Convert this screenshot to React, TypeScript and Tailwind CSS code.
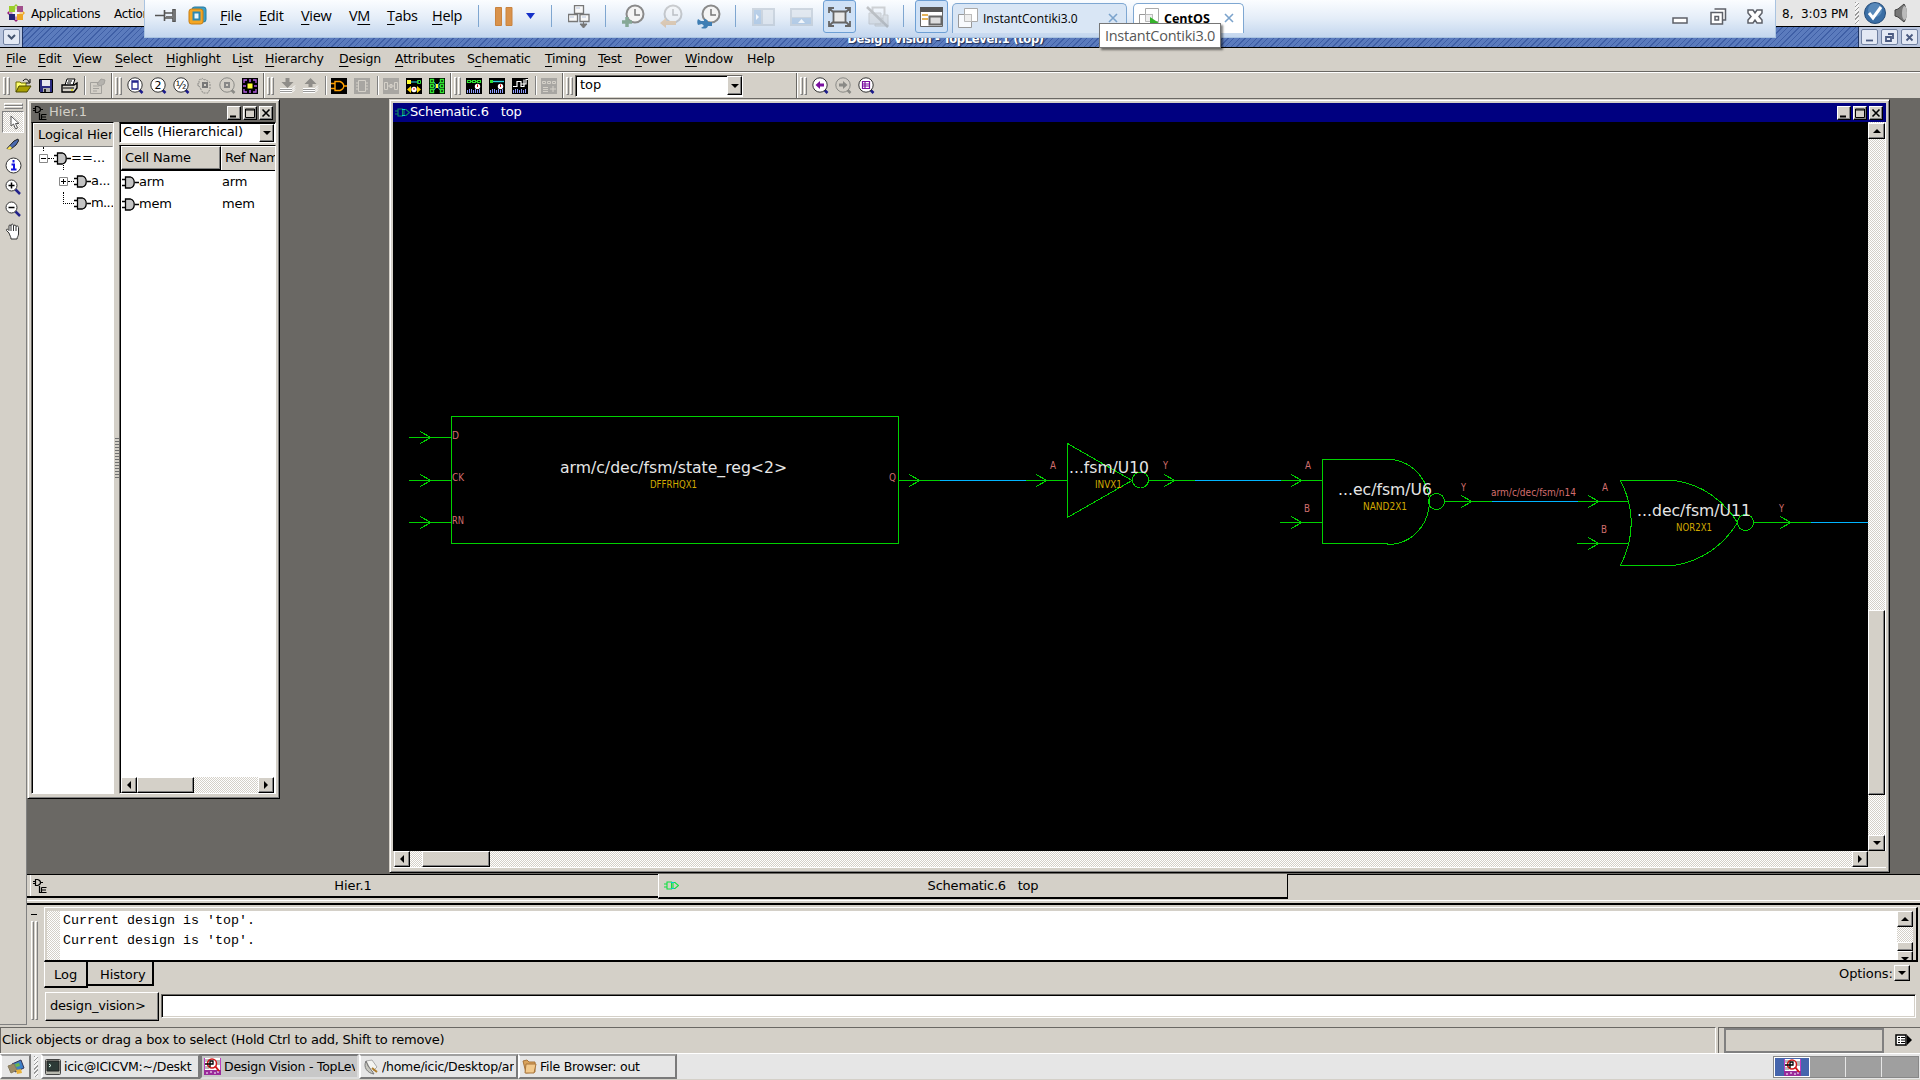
import React from "react";

type Kids = { children?: React.ReactNode; className?: string };

const CHECKER =
  "bg-[repeating-conic-gradient(#ffffff_0_25%,#d4d0c8_0_50%)] bg-[length:2px_2px]";
const RAISED =
  "bg-[#d4d0c8] border border-t-white border-l-white border-r-black border-b-black shadow-[inset_-1px_-1px_0_#808080]";

function Svg({ w, h, children, className = "", vb }: Kids & { w: number; h: number; vb?: string }) {
  return (
    <svg width={w} height={h} viewBox={vb ?? `0 0 ${w} ${h}`} className={`block shrink-0 ${className}`} fill="none">
      {children}
    </svg>
  );
}

function Arrow({ dir }: { dir: "up" | "down" | "left" | "right" }) {
  const d = { up: "M0 6h8L4 2z", down: "M0 2h8L4 6z", left: "M6 0v8L2 4z", right: "M2 0v8l4-4z" }[dir];
  return (
    <Svg w={8} h={8}>
      <path d={d} fill="#000" />
    </Svg>
  );
}

function Btn({ className = "", children }: Kids) {
  return <div className={`flex shrink-0 items-center justify-center ${RAISED} ${className}`}>{children}</div>;
}

function WinButtons() {
  return (
    <div className="flex gap-[2px]">
      <Btn className="h-[14px] w-[14px]">
        <Svg w={10} h={10}><path d="M1 8.500h6" stroke="#000" strokeWidth="2" /></Svg>
      </Btn>
      <Btn className="h-[14px] w-[14px]">
        <Svg w={10} h={10}><path d="M.5 1h9v8.500h-9zM.5 2h9" stroke="#000" /></Svg>
      </Btn>
      <Btn className="h-[14px] w-[14px]">
        <Svg w={10} h={10}><path d="M1.500 1.500l7 7M8.500 1.500l-7 7" stroke="#000" strokeWidth="1.600" /></Svg>
      </Btn>
    </div>
  );
}

/* ---------- virtual machine bar ---------- */

const U = ({ t }: { t: string }) => {
  const i = t.indexOf("&");
  if (i < 0) return <>{t}</>;
  return (
    <>
      {t.slice(0, i)}
      <span className="underline decoration-1 underline-offset-[3px]">{t[i + 1]}</span>
      {t.slice(i + 2)}
    </>
  );
};

const Sep = ({ className = "" }: Kids) => <div className={`mt-[5px] h-[22px] w-px shrink-0 bg-[#7fa6d0] ${className}`} />;

function Clock({ dim, mark }: { dim?: boolean; mark: "plus" | "back" | "wrench" }) {
  return (
    <Svg w={24} h={26} className={dim ? "opacity-40" : ""}>
      <circle cx="14" cy="10" r="8.500" fill="#f4f4f4" stroke="#8a8a8a" strokeWidth="2" />
      <path d="M14 5v6h5" stroke="#777" strokeWidth="1.500" />
      {mark === "plus" && <path d="M6 13v10M1 18h10" stroke="#86a896" strokeWidth="3.500" />}
      {mark === "back" && <path d="M1 19l6-5v3h10v4H7v3z" fill="#d79a55" />}
      {mark === "wrench" && (
        <path d="M1 15l3 2h3v-2c3 0 4 2 4 3h4v4h-4c-1 3-4 3-7 2l3-2-2-2-4 1c-1-2-1-4 0-6z" fill="#3f7eb4" />
      )}
    </Svg>
  );
}

function VmPages({ play }: { play?: boolean }) {
  return (
    <Svg w={20} h={20}>
      <path d="M6.500.5h13v13h-13z" fill="#fff" stroke="#aaa" />
      <path d="M.5 6.500h13v13H.5z" fill="#fff" fillOpacity=".8" stroke="#999" />
      <path d="M6.500 6.500h7v7h-7z" fill="#eee" stroke="#bbb" />
      {play && <path d="M11 9l9 6-9 6z" fill="#35b32a" />}
    </Svg>
  );
}

const vmMenu: [string, string][] = [
  ["&File", "w-[39px]"],
  ["&Edit", "w-[42px]"],
  ["&View", "w-[48px]"],
  ["V&M", "w-[38px]"],
  ["&Tabs", "w-[45px]"],
  ["&Help", "w-[46px]"],
];

function VmBar() {
  return (
    <div className="absolute left-[144px] top-0 flex h-[38px] w-[1632px] border-b border-l border-r border-[#a9c3e0] bg-linear-to-b from-[#fbfdff] via-[#e4edf8] to-[#c3d6ee]">
      <Svg w={22} h={13} className="ml-[10px] mt-[9px]">
        <path d="M0 6.500h9" stroke="#555" strokeWidth="1.500" />
        <path d="M9.500 1v11M10 4h8v5h-8M20 0.500v12h-2v-12z" stroke="#555" strokeWidth="1.600" />
        <path d="M11 7h7v2h-7z" fill="#777" />
      </Svg>
      <Svg w={19} h={20} className="ml-[11px] mt-[6px]">
        <rect x="4" y="1" width="14" height="15" rx="2.500" fill="#3b9fc6" stroke="#27799f" />
        <rect x="1" y="3" width="14" height="15" rx="2.500" fill="#f5a623" stroke="#c77d12" />
        <path d="M5.500 6.500h6v7h-6z" fill="#e8f4fa" stroke="#2c88b0" strokeWidth="2" />
      </Svg>
      <div className="ml-[13px] flex pt-[5px] font-['Open_Sans','Noto_Sans',sans-serif] text-[14.500px] leading-[21px] text-black">
        {vmMenu.map(([t, w]) => (
          <span key={t} className={`${w} whitespace-nowrap tracking-[-0.3px]`}><U t={t} /></span>
        ))}
      </div>
      <Sep />
      <Svg w={18} h={19} className="ml-[16px] mt-[7px]">
        <path d="M.5.5h6v18h-6zM11 .5h6v18h-6z" fill="#d9924b" stroke="#c9833f" />
      </Svg>
      <Svg w={9} h={6} className="ml-[13px] mt-[13px]"><path d="M0 0h9L4.500 6z" fill="#1530c8" /></Svg>
      <Sep className="ml-[16px]" />
      <Svg w={22} h={23} className="ml-[16px] mt-[5px]">
        <path d="M6.500.5h9v8h-9zM.5 9.500h9v7h-9zM12 9.500h9v7h-9z" fill="#f8f8f8" stroke="#777" strokeWidth="1.300" />
        <path d="M8 3h4M2 12h4M14 12h4" stroke="#b9c6dd" />
        <path d="M15.500 17v3M12 19h7l-3.500 4z" stroke="#777" fill="#777" />
      </Svg>
      <Sep className="ml-[15px]" />
      <div className="ml-[15px] mt-[4px] flex gap-[14px]">
        <Clock mark="plus" />
        <Clock mark="back" dim />
        <Clock mark="wrench" />
      </div>
      <Sep className="ml-[14px]" />
      <Svg w={23} h={18} className="ml-[16px] mt-[8px] opacity-60">
        <path d="M0 0h23v18H0z" fill="#b8c3cf" /><path d="M2 2h7v14H2z" fill="#98b9dd" /><path d="M11 2h10v14H11z" fill="#dbe2ea" /><path d="M4 6l3 3-3 3z" fill="#fff" />
      </Svg>
      <Svg w={23} h={18} className="ml-[15px] mt-[8px] opacity-60">
        <path d="M0 0h23v18H0z" fill="#b8c3cf" /><path d="M2 10h19v6H2z" fill="#98b9dd" /><path d="M2 2h19v7H2z" fill="#dbe2ea" /><path d="M8 15l3.500-4 3.500 4z" fill="#fff" />
      </Svg>
      <div className="ml-[10px] flex h-[33px] w-[33px] shrink-0 items-center justify-center rounded-[3px] border border-[#6d9fd4] bg-[#cfe1f6]">
        <Svg w={23} h={20}>
          <path d="M5.500 4.500h12v11h-12z" fill="#e8e8e8" stroke="#666" strokeWidth="1.800" />
          <path d="M1 6V1h5M17 1h5v5M22 14v5h-5M6 19H1v-5M1 1l4 4M22 1l-4 4M22 19l-4-4M1 19l4-4" stroke="#666" strokeWidth="1.800" />
        </Svg>
      </div>
      <Svg w={24} h={22} className="ml-[10px] mt-[6px] opacity-40">
        <path d="M6.500 1.500h12v11h-12z" stroke="#999" strokeWidth="2" />
        <path d="M3 7h12v11H3zM17 9h5v11H9v-2h8z" fill="#c4c8cc" stroke="#999" />
        <path d="M1 1l21 20" stroke="#777" strokeWidth="2.500" />
      </Svg>
      <Sep className="ml-[13px]" />
      <div className="ml-[11px] flex h-[33px] w-[33px] shrink-0 items-center justify-center rounded-[3px] border border-[#6d9fd4] bg-[#cfe1f6]">
        <Svg w={23} h={20}>
          <path d="M.5.5h22v19H.5z" fill="#fff" stroke="#666" /><path d="M0 0h23v5H0z" fill="#555" />
          <path d="M2 7h6v2H2zM2 11h6v2H2z" fill="#e4b45c" /><path d="M9.500 9.500h12v8h-12z" fill="#ddd" stroke="#666" strokeWidth="2" />
        </Svg>
      </div>
      <div className="ml-[4px] mt-[3px] flex h-[30px] w-[175px] shrink-0 rounded-t-[5px] border border-b-0 border-[#7ea7d2] bg-[#d9e6f5] font-['Open_Sans','Noto_Sans',sans-serif] text-[12px]">
        <div className="ml-[5px] mt-[4px]"><VmPages /></div>
        <span className="ml-[5px] mt-[6px] w-[119px] whitespace-nowrap leading-[18px]">InstantContiki3.0</span>
        <Svg w={10} h={10} className="ml-[6px] mt-[9px]"><path d="M1 1l8 8M9 1L1 9" stroke="#7ba3cc" strokeWidth="1.600" /></Svg>
      </div>
      <div className="ml-[6px] mt-[3px] flex h-[30px] w-[111px] shrink-0 rounded-t-[5px] border border-b-0 border-[#7ea7d2] bg-white font-['Open_Sans','Noto_Sans',sans-serif] text-[12.500px] font-bold">
        <div className="ml-[5px] mt-[4px]"><VmPages play /></div>
        <span className="ml-[5px] mt-[6px] w-[54px] leading-[18px]">CentOS</span>
        <Svg w={10} h={10} className="ml-[6px] mt-[9px]"><path d="M1 1l8 8M9 1L1 9" stroke="#7ba3cc" strokeWidth="1.600" /></Svg>
      </div>
      <Svg w={17} h={8} className="ml-[428px] mt-[17px]"><path d="M1 1h14v5H1z" fill="#fff" stroke="#5d6068" strokeWidth="1.500" /></Svg>
      <Svg w={17} h={17} className="ml-[21px] mt-[8px]">
        <path d="M4.500 1h11v11h-3M1 4.500h11.500V16H1z" fill="#fff" stroke="#5d6068" strokeWidth="1.500" /><path d="M5 8.500h3.500V12H5z" stroke="#5d6068" strokeWidth="1.500" />
      </Svg>
      <Svg w={16} h={15} className="ml-[20px] mt-[9px]">
        <path d="M1 1h5l2 3 2-3h5v3l-3 3.500 3 3.500v3h-5l-2-3-2 3H1v-3l3-3.500L1 4z" fill="#fff" stroke="#5d6068" strokeWidth="1.500" />
      </Svg>
    </div>
  );
}

/* ---------- gnome top panel and window title ---------- */

function TopArea() {
  return (
    <div className="relative h-[48px] shrink-0">
      <div className="flex h-[26px] items-center bg-[#e6e6e6] text-[12px]">
        <Svg w={18} h={18} className="ml-[7px]">
          <path d="M9 0l3 3-3 3-3-3z" fill="#9ccd2a" /><path d="M9 18l3-3-3-3-3 3z" fill="#932279" /><path d="M0 9l3-3 3 3-3 3z" fill="#932279" /><path d="M18 9l-3-3-3 3 3 3z" fill="#efa724" />
          <path d="M2 2h6v6H2z" fill="#9ccd2a" /><path d="M10 2h6v6h-6z" fill="#a14f8c" /><path d="M2 10h6v6H2z" fill="#262577" /><path d="M10 10h6v6h-6z" fill="#efa724" />
          <path d="M9 2v14M2 9h14" stroke="#fff" />
        </Svg>
        <span className="ml-[6px] w-[83px] pt-[2px] tracking-[-0.35px]">Applications</span>
        <span className="w-[1668px] pt-[2px] tracking-[-0.3px]">Actions</span>
        <span className="w-[19px] pt-[2px]">8,</span>
        <span className="w-[54px] whitespace-nowrap pt-[2px] tracking-[-0.15px]">3:03 PM</span>
        <div className="h-[22px] w-[4px] bg-[repeating-linear-gradient(135deg,#999_0_1px,#f4f4f4_1px_3px)]" />
        <Svg w={24} h={24} className="ml-[4px]">
          <circle cx="12" cy="12" r="10.500" fill="#3a6ea5" stroke="#274e7a" /><circle cx="12" cy="9" r="7" fill="#6d9bc8" opacity=".6" />
          <path d="M6 12l4 5 8-11" stroke="#fff" strokeWidth="3" />
        </Svg>
        <Svg w={16} h={20} className="ml-[7px]">
          <path d="M1 7l3-1 6-5c3 4 3 14 0 18l-6-5-3-1z" fill="#777" stroke="#444" /><ellipse cx="10.500" cy="10" rx="2.500" ry="7" fill="#bbb" />
        </Svg>
      </div>
      <div className="flex h-[22px] border-b border-t border-black bg-[repeating-linear-gradient(135deg,#3f5fa6_0_1px,#5b7bbd_1px_4px)]">
        <div className="flex w-[23px] items-center justify-center border-r border-[#1f3464] bg-[#b9c5de]">
          <div className="flex h-[16px] w-[17px] items-center justify-center rounded-[2px] border border-[#7080a0] bg-[#e4e9f4]">
            <Svg w={9} h={6}><path d="M1 1l3.500 3.500L8 1" stroke="#44546f" strokeWidth="2" /></Svg>
          </div>
        </div>
        <div className="flex w-[1835px] justify-center pl-[10px]">
          <span className="whitespace-nowrap pt-px text-[11.500px] font-bold leading-[22px] tracking-[-0.3px] text-white [text-shadow:1px_1px_1px_#1c2c55]">
            Design Vision - TopLevel.1 (top)
          </span>
        </div>
        <div className="flex flex-1 items-center justify-center gap-[3px] border-l border-[#1f3464] bg-[#b9c5de]">
          {["M1 7.500h7", "M1 4h5v4H1zM3 1h5v5", "M1.500 1.500l6 6M7.500 1.500l-6 6"].map((d) => (
            <div key={d} className="flex h-[16px] w-[17px] items-center justify-center rounded-[2px] border border-[#7080a0] bg-[#e4e9f4]">
              <Svg w={9} h={9}><path d={d} stroke="#4a5a80" strokeWidth="1.800" /></Svg>
            </div>
          ))}
        </div>
      </div>
      <VmBar />
      <div className="absolute left-[1099px] top-[23px] flex h-[25px] w-[122px] items-center justify-center border border-[#767676] bg-white font-['Open_Sans','Noto_Sans',sans-serif] text-[14.500px] tracking-[-0.25px] text-[#575757] shadow-[2px_2px_2px_rgba(0,0,0,0.5)]">
        InstantContiki3.0
      </div>
    </div>
  );
}

/* ---------- menus and toolbars ---------- */

const menu: [string, string][] = [
  ["&File", "w-[32px]"],
  ["&Edit", "w-[35px]"],
  ["&View", "w-[42px]"],
  ["&Select", "w-[51px]"],
  ["&Highlight", "w-[66px]"],
  ["L&ist", "w-[33px]"],
  ["&Hierarchy", "w-[74px]"],
  ["&Design", "w-[56px]"],
  ["&Attributes", "w-[72px]"],
  ["S&chematic", "w-[78px]"],
  ["&Timing", "w-[53px]"],
  ["&Test", "w-[37px]"],
  ["&Power", "w-[50px]"],
  ["&Window", "w-[62px]"],
  ["Help", "w-[40px]"],
];

const Handle = ({ className = "" }: Kids) => (
  <div className={`flex h-[18px] shrink-0 gap-px ${className}`}>
    <div className="w-[3px] border border-b-[#808080] border-l-white border-r-[#808080] border-t-white" />
    <div className="w-[3px] border border-b-[#808080] border-l-white border-r-[#808080] border-t-white" />
  </div>
);

const BarEnd = ({ className = "" }: Kids) => <div className={`h-full w-[2px] shrink-0 border-l border-r border-l-[#6a6864] border-r-white ${className}`} />;
const VSep = ({ className = "" }: Kids) => <div className={`h-[19px] w-[2px] shrink-0 border-l border-r border-l-[#808080] border-r-white ${className}`} />;

function Lens({ children, dim, className = "" }: Kids & { dim?: boolean }) {
  const c = dim ? "#8a8a86" : "#333";
  return (
    <Svg w={17} h={17} className={className}>
      <path d="M12 12.500l3.500 3.500" stroke={dim ? c : "#1b1b8a"} strokeWidth="2.500" />
      <circle cx="8" cy="8" r="7.200" fill={dim ? "#d4d0c8" : "#fff"} stroke={c} />
      {children}
    </Svg>
  );
}

const Dark = ({ children, className = "" }: Kids) => (
  <Svg w={16} h={16} className={className}>
    <path d="M0 0h16v16H0z" fill="#000" />
    {children}
  </Svg>
);
const Dim = ({ children, className = "" }: Kids) => (
  <Svg w={16} h={16} className={className}>
    <path d="M0 0h16v16H0z" fill="#a8a6a2" />
    {children}
  </Svg>
);
const Bars = () => <path d="M1.500 15v-3M3.500 15v-4M5.500 15v-4M7.500 15v-3M9.500 15v-4M11.500 15v-3M13.500 15v-4" stroke="#8f9bff" />;
const Gauge = () => (
  <>
    <circle cx="11.500" cy="8.500" r="2.700" fill="#fff" />
    <path d="M11.500 6.500v2.500" stroke="#d00" />
  </>
);

function Toolbar() {
  return (
    <div className="flex h-[27px] shrink-0 items-center border-b border-[#6a6864] border-t border-t-white">
      <Handle className="ml-[3px]" />
      <Svg w={17} h={16} className="ml-[5px]">
        <path d="M1 14V4h4l1 1h5v3" fill="#ffff6a" stroke="#6d6b00" /><path d="M1 14l3-6h12l-4 6z" fill="#a8a000" stroke="#4a4800" /><path d="M8 3c2-3 5-2 6 1M15 1v4h-4" stroke="#000" />
      </Svg>
      <Svg w={14} h={14} className="ml-[7px]">
        <path d="M.5.5h13v13h-12l-1-1z" fill="#2b2b80" stroke="#000" /><path d="M3 1h8v6H3z" fill="#e6e6ee" /><path d="M4 9h7v4H4z" fill="#b0b0b0" /><path d="M5 10h2v3H5z" fill="#222" />
      </Svg>
      <Svg w={17} h={15} className="ml-[8px]">
        <path d="M4 7l2-6h8l-2 6" fill="#fff" stroke="#000" /><path d="M1 7h12l3-2v5l-3 4H1z" fill="#d4d0c8" stroke="#000" strokeWidth="1.400" /><path d="M2 10h11M7 3h4M6 5h4" stroke="#000" /><path d="M10 12h2" stroke="#dd0" strokeWidth="1.500" />
      </Svg>
      <VSep className="ml-[6px]" />
      <Svg w={16} h={16} className="ml-[4px]">
        <path d="M.5 4.500h11v11H.5zM3 8h6M3 10.500h6M3 13h4" stroke="#a3a19c" /><path d="M7 6l4-5 4 1-1 4-4 2z" fill="#b5b3ae" stroke="#a3a19c" />
      </Svg>
      <BarEnd className="ml-[5px]" />
      <Handle className="ml-[2px]" />
      <Lens className="ml-[5px]"><path d="M5 4h6v8H5zM5 5h6" stroke="#26268c" strokeWidth="1.300" /></Lens>
      <Lens className="ml-[6px]"><text x="8" y="12" textAnchor="middle" fontSize="11" fill="#000" fontFamily="DejaVu Sans">2</text></Lens>
      <Lens className="ml-[6px]"><text x="8" y="12" textAnchor="middle" fontSize="11" fill="#000" fontFamily="DejaVu Sans">½</text></Lens>
      <Svg w={17} h={17} className="ml-[6px]">
        <path d="M3 9c-3-1-2-3 0-2V3c1-1 2-1 2 0 1-2 2-2 3 0 2-1 3 0 3 1 2 0 3 1 3 3v5l-2 4H7z" stroke="#8a8a86" strokeDasharray="2 1" /><path d="M7 6h4v4H7z" stroke="#777" strokeWidth="2" />
      </Svg>
      <Lens dim className="ml-[6px]"><path d="M6 6h4v4H6z" stroke="#888" strokeWidth="2" /></Lens>
      <Dark className="ml-[6px]">
        <path d="M5.500 5.500h5v5h-5z" fill="#ffff30" /><path d="M2 5V2h3M11 2h3v3M14 11v3h-3M5 14H2v-3" stroke="#b05be0" strokeWidth="1.300" /><path d="M8 1v3M8 12v3M1 8h3M12 8h3" stroke="#b05be0" strokeWidth="1.500" />
      </Dark>
      <BarEnd className="ml-[5px]" />
      <Handle className="ml-[2px]" />
      {[0, 1].map((i) => (
        <Svg key={i} w={17} h={16} className={i ? "ml-[6px]" : "ml-[5px]"}>
          <path d={i ? "M2.500 6h4v3h4V6h4l-6-6z" : "M2.500 4h4V0h4v4h4l-6 6z"} fill="#8f8d89" />
          <path d="M1 10.500h12l3-3M1 12.500h12l3-3M1 14.500h12l3-3" stroke="#fff" /><path d="M1 11.500h12M1 13.500h12" stroke="#999" />
        </Svg>
      ))}
      <VSep className="ml-[6px]" />
      <Dark className="ml-[4px]"><path d="M4 3.500h5c5 2 5 7 0 9H4zM0 5.500h4M0 10.500h4M12 8h4" stroke="#ffa000" strokeWidth="1.400" /></Dark>
      <Dim className="ml-[7px]"><path d="M4.500 2.500h7v11h-7zM2 5h2M2 8h2M2 11h2M12 5h2M12 8h2M12 11h2" stroke="#d4d0c8" /></Dim>
      <VSep className="ml-[7px]" />
      <Dim className="ml-[4px]"><path d="M1.500 4.500h3v7h-3zM11.500 4.500h3v7h-3zM5 8h6M7 6.500h2v3H7z" stroke="#d4d0c8" /></Dim>
      <Dark className="ml-[7px]">
        <path d="M3 4h10" stroke="#2ad6e0" /><path d="M1 2h4v4H1z" fill="#ffff30" /><path d="M11.500 2.500h3v3h-3z" stroke="#30e030" /><path d="M5 8v7l-4-3.500zM11 8v7l4-3.500z" fill="#ffd900" /><circle cx="8" cy="11.500" r="2.700" fill="#fff" /><path d="M8 10v2" stroke="#d00" />
      </Dark>
      <Dark className="ml-[7px]">
        <path d="M4 3l4 5-4 5M12 3L8 8l4 5M5 8h6" stroke="#2ad6e0" /><path d="M1.500 1.500h3v3h-3zM1.500 6.500h3v3h-3zM1.500 11.500h3v3h-3zM11.500 1.500h3v3h-3zM11.500 6.500h3v3h-3zM11.500 11.500h3v3h-3z" stroke="#30e030" strokeWidth="1.400" /><path d="M7 6h2v4H7z" fill="#ffff30" />
      </Dark>
      <BarEnd className="ml-[5px]" />
      <Handle className="ml-[2px]" />
      <Dark className="ml-[5px]"><path d="M1.500 2.500h3v2h-3zM6.500 2.500h3v2h-3zM11.500 2.500h3v2h-3zM5 3.500h1M10 3.500h1" stroke="#30e030" strokeWidth="1.200" /><Bars /><Gauge /></Dark>
      <Dark className="ml-[7px]"><path d="M4 3.500h11" stroke="#2ad6e0" strokeWidth="1.400" /><path d="M1 2h3v3H1z" fill="#30e030" /><Bars /><Gauge /></Dark>
      <Dark className="ml-[7px]"><path d="M1 8.500h4v-5h4v5h3v-7M9 6h5V1.500h2" stroke="#fff" strokeWidth="1.200" /><Bars /></Dark>
      <VSep className="ml-[7px]" />
      <Dim className="ml-[4px]"><path d="M1.500 3.500h3v2h-3zM6.500 3.500h3v2h-3zM11.500 3.500h3v2h-3zM2 9.500h5M2 11.500h5M2 13.500h5M12 8v6M9 11h6" stroke="#d4d0c8" /></Dim>
      <BarEnd className="ml-[5px]" />
      <Handle className="ml-[2px]" />
      <div className="ml-[2px] flex h-[22px] w-[168px] shrink-0 items-center border border-b-white border-l-[#6a6864] border-r-white border-t-[#6a6864] bg-white pl-[4px] shadow-[inset_1px_1px_0_#000]">
        <span className="w-[147px] pb-px">top</span>
        <Btn className="h-[19px] w-[15px]"><Arrow dir="down" /></Btn>
      </div>
      <BarEnd className="ml-[53px]" />
      <Handle className="ml-[2px]" />
      <Lens className="ml-[5px]"><path d="M3.500 8L8 4v2.500h4v3H8V12z" fill="#7a0fa0" /></Lens>
      <Lens dim className="ml-[6px]"><path d="M12.500 8L8 4v2.500H4v3h4V12z" fill="#8a8a86" /></Lens>
      <Lens className="ml-[6px]"><path d="M4.500 4.500h7v7h-7zM4.500 7h7M4.500 9h7M7 4.500v7" stroke="#7a0fa0" strokeWidth="1.200" /></Lens>
    </div>
  );
}

/* ---------- left tool strip ---------- */

function ToolStrip() {
  return (
    <div className="flex w-[27px] shrink-0 flex-col items-center border-b border-r border-[#808080]">
      <div className="mt-[4px] h-[3px] w-[19px] border border-b-[#808080] border-l-white border-r-[#808080] border-t-white" />
      <div className="h-[3px] w-[19px] border border-b-[#808080] border-l-white border-r-[#808080] border-t-white" />
      <div className={`mt-[2px] flex h-[22px] w-[22px] items-center justify-center border border-b-white border-l-[#808080] border-r-white border-t-[#808080] ${CHECKER}`}>
        <Svg w={10} h={15} className="ml-[3px]"><path d="M1 1v10l2.500-2 2 5 2-1-2-4.500H9z" fill="#fff" stroke="#555" /></Svg>
      </div>
      <Svg w={14} h={12} className="mt-[5px]"><path d="M1 10.500L8 3l4-2 .5 2L10 7l-5 4z" fill="#4a6ab0" stroke="#222" /><path d="M1 11l3-3 2 2-2 1.500z" fill="#ffe34a" /></Svg>
      <Svg w={17} h={17} className="mt-[7px]"><circle cx="8.500" cy="8.500" r="7.500" fill="#fff" stroke="#333" /><path d="M8.500 3v2.500M6.500 7.500h2.500v5M6 12.500h5.500" stroke="#1414e0" strokeWidth="2" /></Svg>
      {[true, false].map((p) => (
        <Svg key={String(p)} w={16} h={16} className={p ? "mt-[5px]" : "mt-[6px]"}>
          <path d="M10 10l5 5" stroke="#23238c" strokeWidth="2.500" /><circle cx="6.500" cy="6.500" r="5.500" fill="#fff" stroke="#333" />
          <path d={p ? "M3.500 6.500h6M6.500 3.500v6" : "M3.500 6.500h6"} stroke="#000" strokeWidth="1.500" />
        </Svg>
      ))}
      <Svg w={17} h={17} className="mt-[6px]"><path d="M4 10L1.500 7.500C1 6 2.500 5.500 4 7.500V3c0-1.500 2-1.500 2 0 0-2.500 2.500-2.500 2.500 0 .5-1.500 2.500-1.200 2.500.5 1-1 2.500-.5 2.500 1V11c0 2-1.500 3-1.500 5H6c0-2-1-3-2-6zM6 3v5M8.500 3v5M11 3.500V8" fill="#fff" stroke="#333" /></Svg>
    </div>
  );
}

/* ---------- hierarchy window ---------- */

const Gate = () => (
  <Svg w={17} h={13}>
    <path d="M3.500 1h5c5 1.500 5 9.500 0 11h-5zM0 3.500h3.500M0 9.500h3.500M13 6.500h4" fill="#c4c4c4" stroke="#000" strokeWidth="1.300" />
  </Svg>
);
const HierIcon = ({ c = "#000" }: { c?: string }) => (
  <Svg w={15} h={16}>
    <path d="M2.500 1.500h2c4 1 4 5 0 6h-2zM0 3.500h2M0 5.500h2M8 4.500h2M6.500 8v6.500h2M8.500 9.500h5M8.500 9.500v5h5M9 12h4" stroke={c} strokeWidth="1.200" />
  </Svg>
);
const Box = ({ plus }: { plus?: boolean }) => (
  <Svg w={9} h={9}>
    <path d="M.5.5h8v8h-8z" fill="#fff" stroke="#888" />
    <path d={plus ? "M2 4.500h5M4.500 2v5" : "M2 4.500h5"} stroke="#000" />
  </Svg>
);
const Dots = () => <div className="w-[6px] shrink-0 border-t border-dotted border-black" />;

function HierWindow() {
  return (
    <div className="absolute left-0 top-0 flex h-[700px] w-[253px] flex-col border border-b-black border-l-[#d4d0c8] border-r-black border-t-[#d4d0c8] bg-[#d4d0c8] p-[3px] pb-[4px] shadow-[inset_1px_1px_0_#fff,inset_-1px_-1px_0_#808080]">
      <div className="flex h-[19px] shrink-0 items-center bg-[#6a6864] pl-[2px] pr-[3px] text-[#d4d0c8]">
        <HierIcon />
        <span className="ml-[1px] flex-1 pb-[2px]">Hier.1</span>
        <WinButtons />
      </div>
      <div className="flex min-h-0 flex-1">
        <div className="flex w-[83px] shrink-0 flex-col overflow-hidden border border-b-white border-l-[#6a6864] border-r-white border-t-black bg-white pl-px shadow-[inset_1px_0_0_#000]">
          <div className="h-[24px] w-[80px] shrink-0 overflow-hidden whitespace-nowrap border border-b-[#808080] border-l-white border-r-[#d4d0c8] border-t-white bg-[#d4d0c8] pl-[4px] leading-[21px] tracking-[-0.1px]">
            Logical Hier
          </div>
          <div className="ml-[10px] h-[4px] w-px shrink-0 border-l border-dotted border-black" />
          <div className="flex h-[14px] items-center pl-[6px]">
            <Box /><Dots /><Gate /><span className="whitespace-nowrap pb-px">==...</span>
          </div>
          <div className="ml-[30px] h-[5px] shrink-0 border-l border-dotted border-black" />
          <div className="flex h-[22px] items-center pl-[26px]">
            <Box plus /><Dots /><Gate /><span className="whitespace-nowrap pb-px tracking-[-0.3px]">a...</span>
          </div>
          <div className="flex h-[22px] items-center pl-[30px]">
            <div className="mb-[11px] h-[12px] w-[11px] shrink-0 border-b border-l border-dotted border-black" />
            <Gate /><span className="whitespace-nowrap pb-px tracking-[-0.6px]">m...</span>
          </div>
        </div>
        <div className="flex w-[5px] shrink-0 flex-col justify-center gap-[2px] pl-px">
          {Array.from({ length: 14 }, (_, i) => (
            <div key={i} className="h-px w-[4px] bg-[#707070]" />
          ))}
        </div>
        <div className="flex min-w-0 flex-1 flex-col">
          <div className="flex h-[21px] shrink-0 border border-b-white border-l-[#6a6864] border-r-white border-t-black bg-white pl-[3px] shadow-[inset_1px_1px_0_#000]">
            <span className="flex-1 whitespace-nowrap leading-[18px] tracking-[-0.15px]">Cells (Hierarchical)</span>
            <Btn className="mr-px mt-px h-[18px] w-[15px]"><Arrow dir="down" /></Btn>
          </div>
          <div className="mt-[2px] flex min-h-0 flex-1 flex-col border border-b-white border-l-[#6a6864] border-r-white border-t-black bg-white pl-px shadow-[inset_1px_1px_0_#000]">
            <div className="flex h-[25px] shrink-0 border-b border-black leading-[22px]">
              <div className={`w-[100px] pl-[3px] tracking-[-0.1px] ${RAISED}`}>Cell Name</div>
              <div className="min-w-0 flex-1 overflow-hidden whitespace-nowrap border-l border-t border-white bg-[#d4d0c8] pl-[3px] tracking-[-0.3px]">Ref Nam</div>
            </div>
            {["arm", "mem"].map((n) => (
              <div key={n} className="flex h-[22px] shrink-0 items-center pl-px tracking-[-0.2px]">
                <Gate /><span className="w-[83px] pb-px">{n}</span><span className="pb-px">{n}</span>
              </div>
            ))}
            <div className="flex-1" />
            <div className={`mr-px flex h-[16px] shrink-0 ${CHECKER}`}>
              <Btn className="w-[16px]"><Arrow dir="left" /></Btn>
              <Btn className="w-[57px]" />
              <div className="flex-1" />
              <Btn className="w-[16px]"><Arrow dir="right" /></Btn>
            </div>
          </div>
        </div>
      </div>
    </div>
  );
}

/* ---------- schematic window ---------- */

const labels: [string, number, number, number, number, string][] = [
  ["arm/c/dec/fsm/state_reg<2>", 560, 473, 227, 16, "#e6e6e6"],
  ["DFFRHQX1", 650, 488, 47, 9.7, "#d2aa00"],
  ["D", 452, 439, 7, 9.7, "#d26e6e"],
  ["CK", 452, 481, 12, 9.7, "#d26e6e"],
  ["RN", 452, 524, 12, 9.7, "#d26e6e"],
  ["Q", 889, 481, 7, 9.7, "#d26e6e"],
  ["A", 1050, 469, 6, 9.7, "#d26e6e"],
  ["...fsm/U10", 1069, 473, 80, 16, "#e6e6e6"],
  ["INVX1", 1095, 488, 27, 9.7, "#d2aa00"],
  ["Y", 1163, 469, 5, 9.7, "#d26e6e"],
  ["A", 1305, 469, 6, 9.7, "#d26e6e"],
  ["B", 1304, 512, 6, 9.7, "#d26e6e"],
  ["...ec/fsm/U6", 1338, 495, 94, 16, "#e6e6e6"],
  ["NAND2X1", 1363, 510, 44, 9.7, "#d2aa00"],
  ["Y", 1461, 491, 5, 9.7, "#d26e6e"],
  ["arm/c/dec/fsm/n14", 1491, 496, 85, 9.7, "#d26e6e"],
  ["A", 1602, 491, 6, 9.7, "#d26e6e"],
  ["B", 1601, 533, 6, 9.7, "#d26e6e"],
  ["...dec/fsm/U11", 1637, 516, 114, 16, "#e6e6e6"],
  ["NOR2X1", 1676, 531, 36, 9.7, "#d2aa00"],
  ["Y", 1779, 512, 5, 9.7, "#d26e6e"],
];
const arrows: [number, number][] = [
  [431, 437.5], [431, 480.5], [431, 522.5], [920, 480.5], [1047, 480.5], [1175, 480.5],
  [1302, 480.5], [1302, 522.5], [1472, 501.5], [1599, 501.5], [1599, 543.5], [1791, 522.5],
];

function Schematic() {
  return (
    <svg viewBox="394 122 1474 729" width={1474} height={729} className="block bg-black" fill="none">
      <g stroke="#00d200" shapeRendering="crispEdges">
        <path d="M451.500 416.500h447v127h-447z" />
        <path d="M409 437.500h42M409 480.500h42M409 522.500h42M899 480.500h41M1026 480.500h41M1149 480.500h46M1281 480.500h41M1280 522.500h42M1445 501.500h47M1578 501.500h51M1577 543.500h52M1754 522.500h57" />
        <path d="M1067.500 443.500v74L1132 480.500z" />
        <circle cx="1140.500" cy="480" r="8" />
        <path d="M1393 459.500h-70.500v84h65" />
        <path d="M1393 459.500C1415 463 1429 482 1429.500 501.500C1429 524 1413 544.500 1387 544.500" />
        <circle cx="1436.500" cy="501.500" r="8" />
        <path d="M1674 480.500h-53.500Q1642 523 1620.500 565.500h53.500C1702 561 1724 545 1737.500 522.500C1724 501 1702 484 1674 480.500" />
        <circle cx="1745.500" cy="522.500" r="8" />
        {arrows.map(([x, y]) => (
          <path key={`${x}-${y}`} d={`M${x - 11} ${y - 6}L${x} ${y}L${x - 11} ${y + 6}`} />
        ))}
      </g>
      <path d="M940 480.500h86M1195 480.500h86M1492 501.500h86M1811 522.500h57" stroke="#00b4ff" shapeRendering="crispEdges" />
      {labels.map(([t, x, y, w, s, c]) => (
        <text key={`${x}-${y}`} x={x} y={y} fontSize={s} fill={c} textLength={w} lengthAdjust="spacingAndGlyphs" fontFamily="DejaVu Sans, sans-serif">
          {t}
        </text>
      ))}
    </svg>
  );
}

const NetIcon = ({ c = "#10e040" }: { c?: string }) => (
  <Svg w={15} h={9}>
    <path d="M3 1h4.500v7H3zM0 3h3M0 6h3M9 1.500h2l3.500 3-3.500 3H9z" stroke={c} strokeWidth="1.100" /><path d="M7 1.500h3M7 7.500h3" stroke="#00c8d8" />
  </Svg>
);

function SchematicWindow() {
  return (
    <div className="absolute left-[362px] top-0 flex h-[774px] w-[1501px] flex-col border border-b-black border-l-[#d4d0c8] border-r-black border-t-[#d4d0c8] bg-[#d4d0c8] p-[3px] shadow-[inset_1px_1px_0_#fff,inset_-1px_-1px_0_#808080]">
      <div className="flex h-[19px] shrink-0 items-center bg-[#000080] pl-[2px] pr-[3px] text-white">
        <NetIcon c="#109060" />
        <span className="flex-1 whitespace-pre pb-[2px] tracking-[-0.15px]">{"Schematic.6   top"}</span>
        <WinButtons />
      </div>
      <div className="flex h-[729px] shrink-0 border-l border-black">
        <div className="w-[1474px] shrink-0 overflow-hidden"><Schematic /></div>
        <div className={`flex flex-1 flex-col ${CHECKER}`}>
          <Btn className="mt-px h-[16px]"><Arrow dir="up" /></Btn>
          <div className="h-[471px]" />
          <Btn className="h-[185px]" />
          <div className="flex-1" />
          <Btn className="h-[16px]"><Arrow dir="down" /></Btn>
        </div>
        <div className="w-px bg-white" />
      </div>
      <div className="flex h-[17px] shrink-0 border-b border-white">
        <div className={`ml-px flex w-[1474px] ${CHECKER}`}>
          <Btn className="w-[16px]"><Arrow dir="left" /></Btn>
          <div className="w-[12px]" />
          <Btn className="w-[68px]" />
          <div className="flex-1" />
          <Btn className="w-[16px]"><Arrow dir="right" /></Btn>
        </div>
      </div>
    </div>
  );
}

/* ---------- bottom ---------- */

function Tabs() {
  return (
    <div className="flex h-[25px] shrink-0">
      <div className="flex h-[24px] w-[631px] items-center border-b-2 border-t border-black pl-[3px]">
        <div className="flex h-full w-full items-center border-l border-white pl-[2px]">
          <HierIcon />
          <span className="flex-1 pt-px text-center tracking-[-0.1px]">Hier.1</span>
        </div>
      </div>
      <div className="flex h-[25px] w-[630px] items-center border-b-2 border-l border-r border-b-black border-l-white border-r-black pl-[5px]">
        <NetIcon />
        <span className="flex-1 whitespace-pre text-center tracking-[-0.2px]">{"Schematic.6   top"}</span>
      </div>
      <div className="flex-1 border-t border-black" />
    </div>
  );
}

function Console() {
  return (
    <div className="flex h-[119px] shrink-0 pt-[2px]">
      <div className="w-[17px] shrink-0 pl-[4px] pt-[7px]">
        <div className="h-px w-[6px] bg-black" />
        <div className="mt-[6px] flex h-[99px] gap-px">
          <div className="w-[3px] border border-b-[#808080] border-l-white border-r-[#808080] border-t-white" />
          <div className="w-[3px] border border-b-[#808080] border-l-white border-r-[#808080] border-t-white" />
        </div>
      </div>
      <div className="flex flex-1 flex-col">
        <div className="flex h-[55px] w-[1874px] shrink-0 border border-b-2 border-b-black border-l-white border-r-2 border-r-black border-t-white pl-[2px] pr-[3px] pt-[3px]">
          <div className={`w-[13px] shrink-0 ${CHECKER}`} />
          <div className="flex-1 overflow-hidden bg-white pl-[3px] font-['Liberation_Mono','DejaVu_Sans_Mono',monospace] text-[13.330px] leading-[20px]">
            <div>Current design is 'top'.</div>
            <div>Current design is 'top'.</div>
          </div>
          <div className={`flex w-[16px] flex-col overflow-hidden ${CHECKER}`}>
            <Btn className="h-[16px]"><Arrow dir="up" /></Btn>
            <div className="h-[15px] shrink-0" />
            <Btn className="h-[9px]" />
            <Btn className="h-[16px]"><Arrow dir="down" /></Btn>
          </div>
        </div>
        <div className="flex h-[30px] shrink-0">
          <div className="h-[26px] w-[44px] border border-b-2 border-b-black border-l-white border-r-2 border-r-black border-t-0 pl-[9px] leading-[25px]">Log</div>
          <div className="h-[24px] w-[66px] border-b-2 border-r-2 border-black pl-[12px] leading-[26px] tracking-[-0.1px]">History</div>
          <span className="ml-[1685px] w-[55px] leading-[24px] tracking-[-0.1px]">Options:</span>
          <Btn className="mt-[3px] h-[16px] w-[16px]"><Arrow dir="down" /></Btn>
        </div>
        <div className="flex items-start">
          <div className={`ml-px h-[29px] w-[114px] pl-[4px] leading-[26px] tracking-[-0.2px] ${RAISED}`}>design_vision&gt;</div>
          <div className="ml-[2px] mt-[2px] h-[24px] w-[1755px] border border-b-white border-l-[#6a6864] border-r-white border-t-[#6a6864] bg-white shadow-[inset_1px_1px_0_#000,inset_-1px_-1px_0_#d4d0c8]" />
        </div>
      </div>
    </div>
  );
}

const DvIcon = () => (
  <Svg w={17} h={17}>
    <path d="M0 0h17v17H0z" fill="#fff" /><path d="M.5 0v17M16.500 0v17" stroke="#c23cc2" /><path d="M1 1h4v3H1zM12 2h4v5h-4zM1 8h4v3H1z" fill="#b8b8b8" />
    <path d="M0 12h17v5H0z" fill="#9a2a9a" /><path d="M2 15h2M6 14h2M10 15h2M13 14h2" stroke="#fff" />
    <circle cx="8" cy="5.500" r="4.500" stroke="#d01818" strokeWidth="1.500" /><path d="M11 8l4 5" stroke="#d01818" strokeWidth="2" /><path d="M6 9V3h3v3H4M1 6h4" stroke="#000" strokeWidth="1.300" />
  </Svg>
);

function Task({ icon, text, active }: { icon: React.ReactNode; text: string; active?: boolean }) {
  return (
    <div className={`flex h-[25px] w-[159px] items-center overflow-hidden border-2 pl-[2px] pr-[2px] ${active ? "border-[#7a7a7a] border-r-[#dcdcdc] border-b-[#dcdcdc] bg-[#c8c8c8]" : "border-b-[#7a7a7a] border-l-white border-r-[#7a7a7a] border-t-[#a0a0a0] bg-[#e6e6e6]"}`}>
      {icon}
      <span className="ml-[3px] min-w-0 flex-1 overflow-hidden whitespace-nowrap pt-px tracking-[-0.25px]">{text}</span>
    </div>
  );
}

function Taskbar() {
  return (
    <div className="flex h-[25px] shrink-0 bg-[#e6e6e6] text-[12.500px]">
      <div className="flex h-[25px] w-[31px] items-center justify-center border-2 border-b-[#7a7a7a] border-l-white border-r-[#7a7a7a] border-t-[#a0a0a0]">
        <Svg w={18} h={16}><path d="M5 5l9-4 3 8-9 4z" fill="#3d7fc8" stroke="#335" /><path d="M1 7l6-2 3 6-6 3z" fill="#9a8a68" stroke="#887a5a" /><path d="M9 11l5-1 1 4-5 1z" fill="#e8b23a" /><path d="M8 5l4-1 1 3-4 1z" fill="#69b84a" /></Svg>
      </div>
      <div className="ml-[3px] mr-[3px] mt-[2px] h-[21px] w-[4px] bg-[repeating-linear-gradient(135deg,#999_0_1px,#f4f4f4_1px_3px)]" />
      <Task icon={<Svg w={16} h={16}><rect x=".5" y=".5" width="15" height="15" rx="1" fill="#b8b8ae" stroke="#444" /><path d="M2 2h12v10H2z" fill="#2c3a36" stroke="#222" /><path d="M4 5l2 1.500L4 8" stroke="#dfe" /></Svg>} text="icic@ICICVM:~/Deskt" />
      <Task active icon={<DvIcon />} text="Design Vision - TopLev" />
      <Task icon={<Svg w={16} h={16}><path d="M3 2l6-1 5 7-5 5z" fill="#f4f4f0" stroke="#aaa" /><path d="M3 2C0 8 4 14 11 15l-2-3-4-5z" fill="#c8c8c0" stroke="#777" /><path d="M9 9l5 4" stroke="#b07d2a" strokeWidth="2" /></Svg>} text="/home/icic/Desktop/arm" />
      <Task icon={<Svg w={15} h={15}><path d="M1 2l4-1 2 2h6v10l-9 1z" fill="#d9a25a" stroke="#a8743a" /><path d="M4 5h10l-2 9H3z" fill="#f2c98c" stroke="#a8743a" /></Svg>} text="File Browser: out" />
      <div className="ml-[1096px] mt-[2px] flex h-[22px] w-[146px] border border-[#888] bg-[#9f9f9f]">
        <div className="flex w-[36px] items-center justify-center border border-white bg-[#4565ad]"><DvIcon /></div>
        <div className="w-[36px] border-r border-[#e6e6e6]" />
        <div className="w-[36px] border-r border-[#e6e6e6]" />
      </div>
    </div>
  );
}

export default function App() {
  return (
    <div className="flex h-[1080px] w-[1920px] flex-col overflow-hidden bg-[#d4d0c8] font-['DejaVu_Sans','Liberation_Sans',sans-serif] text-[13px] leading-[16px] text-black">
      <TopArea />
      <div className="flex h-[24px] shrink-0 items-center border-b border-[#6a6864] pb-[2px] pl-[6px] text-[12.500px]">
        {menu.map(([t, w]) => (
          <span key={t} className={`${w} whitespace-nowrap tracking-[-0.2px]`}><U t={t} /></span>
        ))}
      </div>
      <Toolbar />
      <div className="flex h-[926px] shrink-0">
        <ToolStrip />
        <div className="flex min-w-0 flex-1 flex-col">
          <div className="relative h-[775px] shrink-0 bg-[#6a6864]">
            <HierWindow />
            <SchematicWindow />
          </div>
          <Tabs />
          <div className="mt-px h-[5px] shrink-0 border-b-2 border-t border-b-black border-t-white" />
          <Console />
        </div>
      </div>
      <div className="mt-[2px] flex h-[27px] shrink-0 border-b border-white">
        <div className="w-[1716px] border-l border-r border-t border-l-[#6a6864] border-r-white border-t-[#6a6864] pl-px text-[13px] leading-[24px] tracking-[-0.22px]">
          Click objects or drag a box to select (Hold Ctrl to add, Shift to remove)
        </div>
        <div className="ml-[2px] flex flex-1 items-start border-l border-t border-[#6a6864] pl-[5px]">
          <div className="h-[25px] w-[160px] border-2 border-[#808080]" />
          <Svg w={17} h={12} className="ml-[11px] mt-[6px]">
            <path d="M1 1h10v10H1z" fill="#fff" stroke="#000" strokeWidth="1.500" /><path d="M3 3.500h2M6 3.500h4M3 6h2M6 6h4M3 8.500h2M6 8.500h4" stroke="#000" /><path d="M12 1v10l5-5z" fill="#000" />
          </Svg>
        </div>
      </div>
      <Taskbar />
    </div>
  );
}
